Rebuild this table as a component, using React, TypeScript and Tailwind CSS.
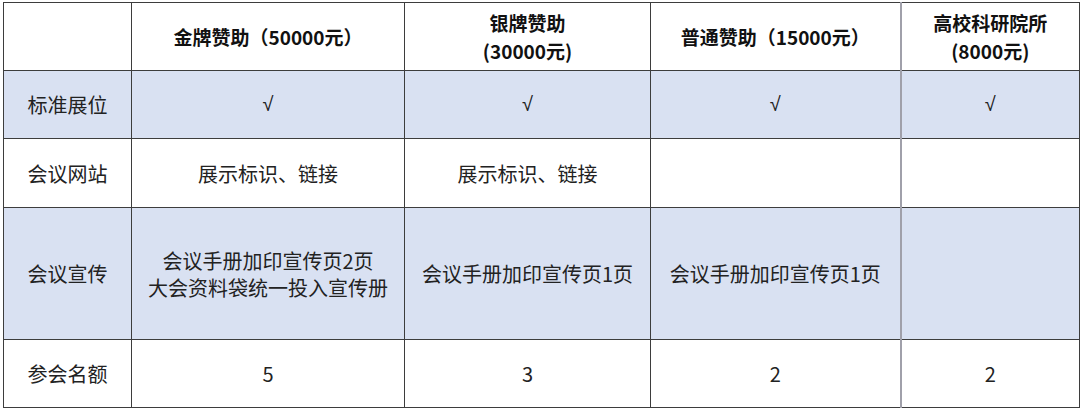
const headers = [
  ["金牌赞助（50000元）"],
  ["银牌赞助", "(30000元)"],
  ["普通赞助（15000元）"],
  ["高校科研院所", "(8000元)"],
];

const rows: { label: string; cells: string[][]; blue: boolean; h: string }[] = [
  { label: "标准展位", cells: [["√"], ["√"], ["√"], ["√"]], blue: true, h: "h-[68px]" },
  {
    label: "会议网站",
    cells: [["展示标识、链接"], ["展示标识、链接"], [], []],
    blue: false,
    h: "h-[69px]",
  },
  {
    label: "会议宣传",
    cells: [
      ["会议手册加印宣传页2页", "大会资料袋统一投入宣传册"],
      ["会议手册加印宣传页1页"],
      ["会议手册加印宣传页1页"],
      [],
    ],
    blue: true,
    h: "h-[132px]",
  },
  { label: "参会名额", cells: [["5"], ["3"], ["2"], ["2"]], blue: false, h: "h-[68px]" },
];

function Cell({
  lines,
  bold,
  sep,
}: {
  lines: string[];
  bold?: boolean;
  sep?: boolean;
}) {
  return (
    <td
      className={`border border-[#3d3d3d] p-0 text-center align-middle ${
        sep ? "border-r-2 border-r-[#a0a0aa]" : ""
      } ${
        bold
          ? "text-[19px] leading-[28px] font-bold text-[#111]"
          : "text-[20px] leading-[27px] text-[#222]"
      }`}
    >
      {lines.map((l, i) => (
        <div
          key={i}
          className={l === "√" ? "font-['Liberation_Sans',sans-serif] text-[20px]" : ""}
        >
          {l}
        </div>
      ))}
    </td>
  );
}

export default function App() {
  return (
    <div
      className="h-[410px] w-[1080px] bg-white pl-[3px] pt-[2px]"
      style={{ fontFamily: '"Noto Sans CJK SC", "Noto Sans", sans-serif' }}
    >
      <table className="w-[1076px] table-fixed border-collapse">
        <colgroup>
          <col className="w-[128px]" />
          <col className="w-[273px]" />
          <col className="w-[246px]" />
          <col className="w-[250px]" />
          <col className="w-[179px]" />
        </colgroup>
        <tbody>
          <tr className="h-[68px] bg-white">
            <Cell lines={[]} />
            {headers.map((h, i) => (
              <Cell key={i} lines={h} bold sep={i === 2} />
            ))}
          </tr>
          {rows.map((r) => (
            <tr key={r.label} className={`${r.h} ${r.blue ? "bg-[#d9e1f2]" : "bg-white"}`}>
              <Cell lines={[r.label]} />
              {r.cells.map((c, i) => (
                <Cell key={i} lines={c} sep={i === 2} />
              ))}
            </tr>
          ))}
        </tbody>
      </table>
    </div>
  );
}
